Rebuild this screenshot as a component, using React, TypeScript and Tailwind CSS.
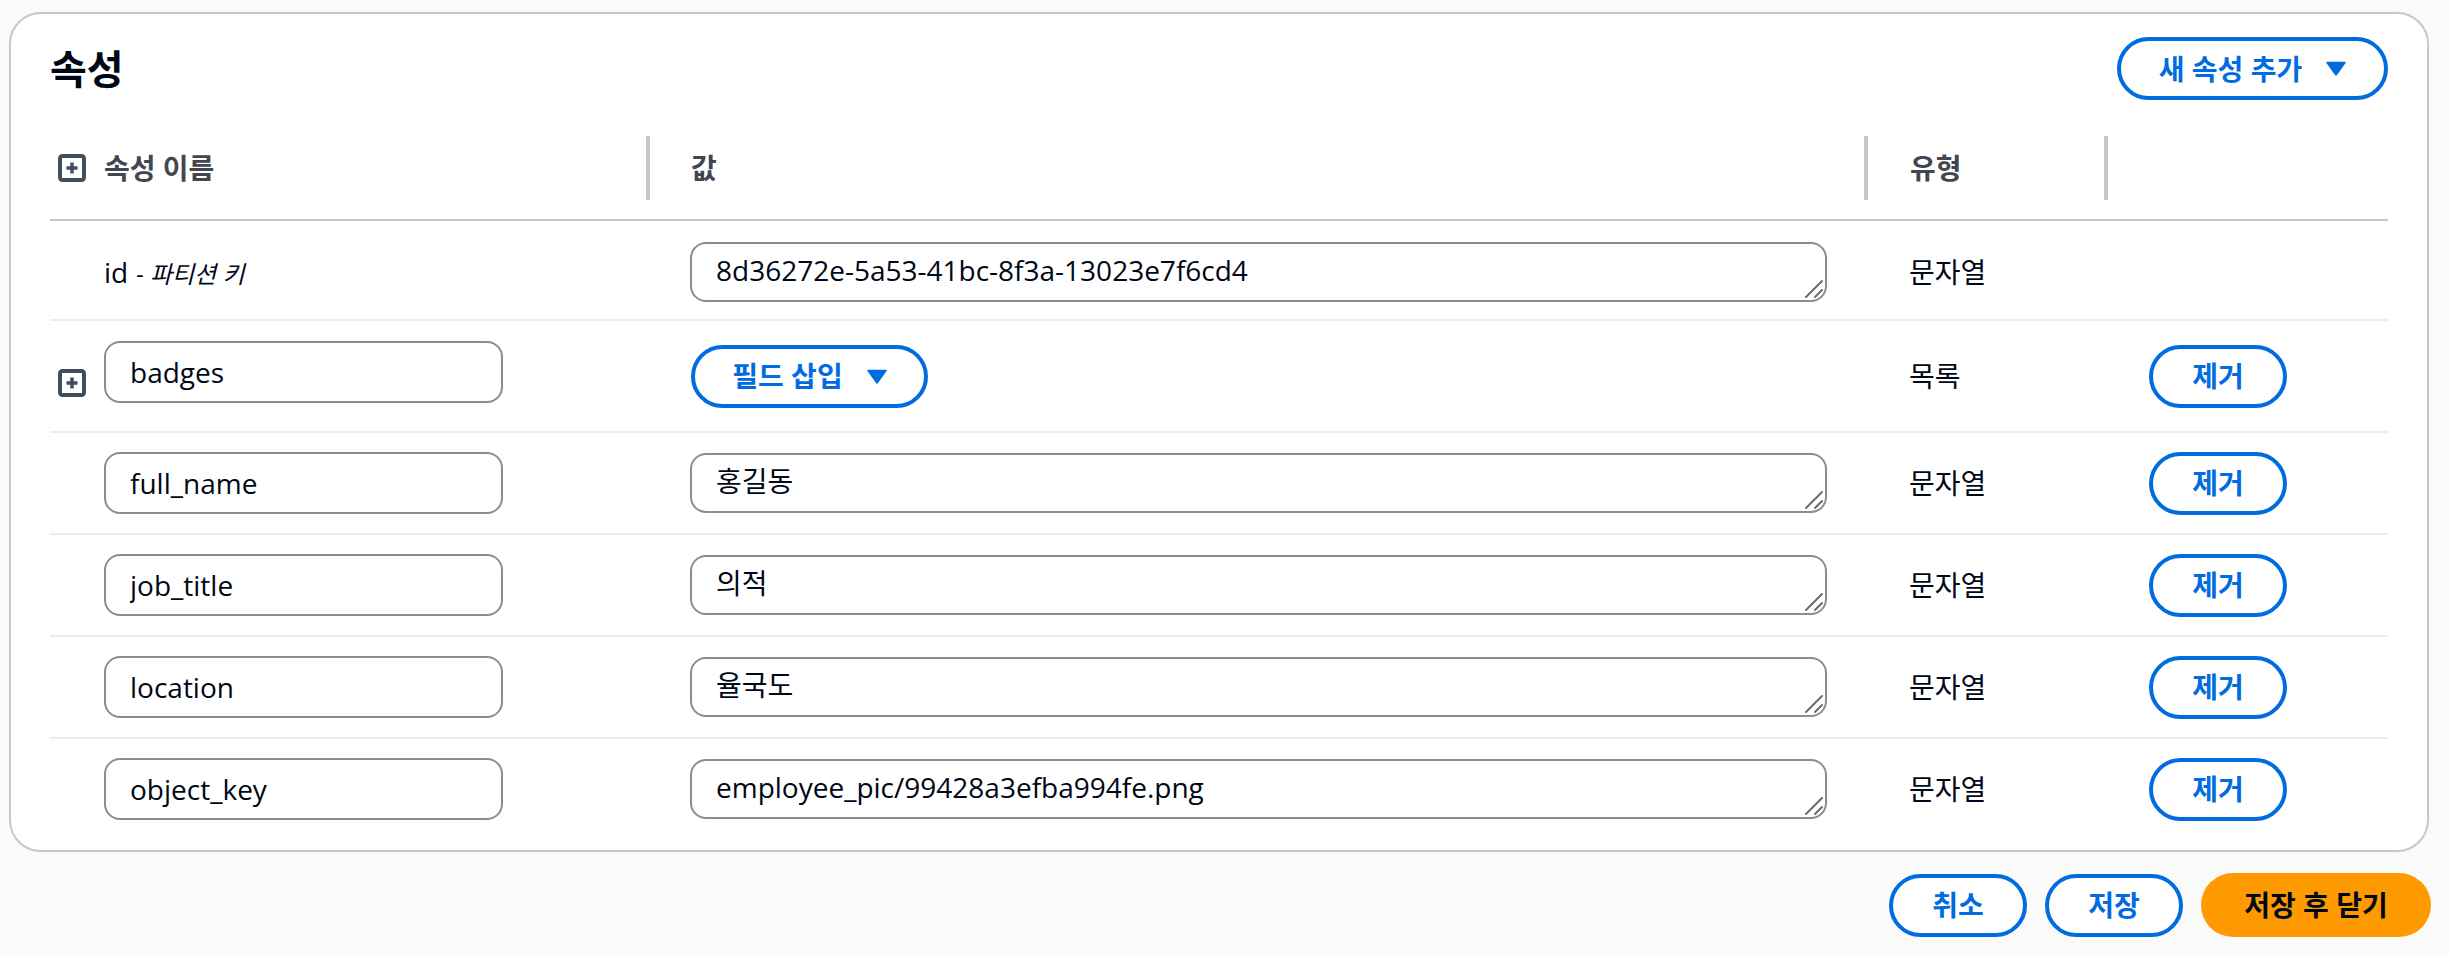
import React from 'react'

const BLUE = 'text-[#006ce0]'

function ExpandIcon() {
  return (
    <svg width="28" height="28" viewBox="0 0 28 28" fill="none" className="block shrink-0">
      <rect x="2" y="2" width="24" height="24" rx="2.5" stroke="#414d5c" strokeWidth="4" />
      <path d="M14 8.5v11M8.5 14h11" stroke="#414d5c" strokeWidth="3.5" />
    </svg>
  )
}

function Caret() {
  return (
    <svg width="20" height="15" viewBox="0 0 20 15" className="block shrink-0">
      <path d="M1 1.5h18L10 14z" fill="#006ce0" stroke="#006ce0" strokeWidth="1.5" strokeLinejoin="round" />
    </svg>
  )
}

function OutlineButton({ label, width, caret }: { label: string; width: string; caret?: boolean }) {
  return (
    <button
      className={`flex h-[63px] ${width} items-center justify-center gap-[24px] rounded-full border-[4px] border-[#006ce0] bg-white text-[28px] font-bold ${BLUE}`}
    >
      <span>{label}</span>
      {caret && <Caret />}
    </button>
  )
}

function NameInput({ value }: { value: string }) {
  return (
    <input
      defaultValue={value}
      className="block h-[62px] w-[399px] rounded-[16px] border-2 border-[#8c8c94] bg-white pl-[24px] text-[28px] text-[#000716] outline-none"
    />
  )
}

function ValueArea({ value }: { value: string }) {
  return (
    <div className="relative w-[1137px]">
      <textarea
        defaultValue={value}
        rows={1}
        className="block h-[60px] w-full resize-none overflow-hidden rounded-[16px] border-2 border-[#8c8c94] bg-white pl-[24px] pt-[6px] text-[28px] leading-[40px] text-[#000716] outline-none"
      />
      {/* resize grip */}
      <svg width="20" height="20" viewBox="0 0 20 20" className="pointer-events-none absolute bottom-[3px] right-[3px]">
        <path d="M2 18L18 2M11 18l7-7" stroke="#6b6b72" strokeWidth="2" strokeLinecap="round" />
      </svg>
    </div>
  )
}

const cols = 'grid grid-cols-[598px_1218px_240px_282px]'

const rows = [
  { name: 'full_name', value: '홍길동' },
  { name: 'job_title', value: '의적' },
  { name: 'location', value: '율국도' },
  { name: 'object_key', value: 'employee_pic/99428a3efba994fe.png' },
]

export default function App() {
  return (
    <div className="min-h-screen bg-[#fafafa] pl-[9px] pr-[20px] pt-[12px] font-['Open_Sans','Noto_Sans_CJK_KR',sans-serif] text-[#000716]">
      <div className="rounded-[32px] border-2 border-[#c6c6cd] bg-white px-[39px] pb-[11px] pt-[23px]">
        {/* Title */}
        <div className="mb-[19px] flex h-[63px] items-center justify-between">
          <h2 className="text-[40px] font-bold leading-none">속성</h2>
          <OutlineButton label="새 속성 추가" width="w-[271px]" caret />
        </div>

        {/* Table header */}
        <div className="flex h-[102px] items-center border-b-2 border-[#c6c6cd] pb-[2px] text-[28px] font-bold text-[#424650]">
          <div className="flex w-[596px] items-center gap-[18px] pl-[8px]">
            <ExpandIcon />
            <span>속성 이름</span>
          </div>
          <div className="h-[64px] w-[4px] bg-[#c6c6cd]" />
          <div className="w-[1214px] pl-[41px]">값</div>
          <div className="h-[64px] w-[4px] bg-[#c6c6cd]" />
          <div className="w-[236px] pl-[42px]">유형</div>
          <div className="h-[64px] w-[4px] bg-[#c6c6cd]" />
          <div className="w-[280px]" />
        </div>

        {/* id row */}
        <div className={`${cols} h-[100px] items-center border-b-2 border-[#ebebf0] pt-[3px] text-[28px]`}>
          <div className="pl-[54px]">
            id<span className="ml-[8px] text-[24px] italic">- 파티션 키</span>
          </div>
          <div className="pl-[42px]">
            <ValueArea value="8d36272e-5a53-41bc-8f3a-13023e7f6cd4" />
          </div>
          <div className="pl-[43px]">문자열</div>
          <div />
        </div>

        {/* badges row */}
        <div className={`${cols} h-[112px] items-center border-b-2 border-[#ebebf0] text-[28px]`}>
          <div className="flex h-full items-start gap-[18px] pl-[8px] pt-[20px]">
            <div className="pt-[28px]">
              <ExpandIcon />
            </div>
            <NameInput value="badges" />
          </div>
          <div className="pl-[43px]">
            <OutlineButton label="필드 삽입" width="w-[237px]" caret />
          </div>
          <div className="pl-[43px]">목록</div>
          <div className="pl-[43px]">
            <OutlineButton label="제거" width="w-[138px]" />
          </div>
        </div>

        {rows.map((r, i) => (
          <div
            key={r.name}
            className={`${cols} items-center text-[28px] ${
              i === rows.length - 1 ? 'h-[100px]' : 'h-[102px] border-b-2 border-[#ebebf0]'
            }`}
          >
            <div className="pl-[54px]">
              <NameInput value={r.name} />
            </div>
            <div className="pl-[42px]">
              <ValueArea value={r.value} />
            </div>
            <div className="pl-[43px]">문자열</div>
            <div className="pl-[43px]">
              <OutlineButton label="제거" width="w-[138px]" />
            </div>
          </div>
        ))}
      </div>

      {/* Footer */}
      <div className="-mr-[2px] mt-[21px] flex items-center justify-end gap-[18px]">
        <OutlineButton label="취소" width="w-[138px]" />
        <OutlineButton label="저장" width="w-[138px]" />
        <button className="h-[64px] w-[230px] rounded-full bg-[#ff9900] text-[28px] font-bold text-[#000716]">
          저장 후 닫기
        </button>
      </div>
    </div>
  )
}
